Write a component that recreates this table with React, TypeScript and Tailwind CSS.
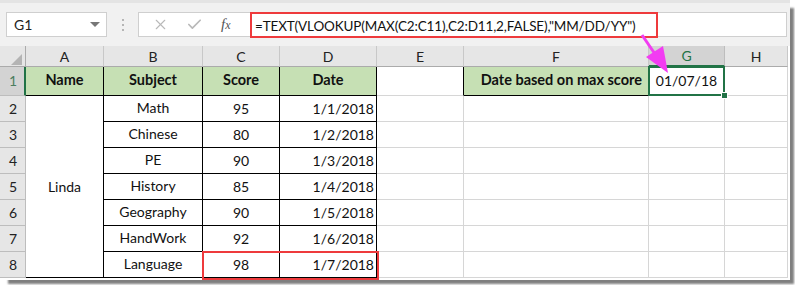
import { X, Check } from "lucide-react";

const font = { fontFamily: "Lato, 'Open Sans', sans-serif" };

// column widths: row header, A..H
const cols = "grid-cols-[26px_78px_99px_77px_97px_87px_185px_76px_63px]";

const rows = [
  { subject: "Math", score: "95", date: "1/1/2018" },
  { subject: "Chinese", score: "80", date: "1/2/2018" },
  { subject: "PE", score: "90", date: "1/3/2018" },
  { subject: "History", score: "85", date: "1/4/2018" },
  { subject: "Geography", score: "90", date: "1/5/2018" },
  { subject: "HandWork", score: "92", date: "1/6/2018" },
  { subject: "Language", score: "98", date: "1/7/2018" },
];

function FormulaBar() {
  return (
    <div className="h-[46px] bg-[#f1f1f1] border-t-[3px] border-[#e4e4e4] flex items-start pt-[9px] pl-[6px]">
      <div className="w-[101px] h-[25px] bg-white border border-[#cfcfcf] flex items-center justify-between pl-[7px] pr-[6px]">
        <span className="text-[14px] text-[#222]">G1</span>
        <span className="w-0 h-0 border-l-[5px] border-r-[5px] border-t-[5px] border-l-transparent border-r-transparent border-t-[#777]" />
      </div>
      <div className="w-[31px] h-[25px] flex flex-col items-center justify-center gap-[3px]">
        <span className="w-[2px] h-[2px] bg-[#b5b5b5]" />
        <span className="w-[2px] h-[2px] bg-[#b5b5b5]" />
        <span className="w-[2px] h-[2px] bg-[#b5b5b5]" />
      </div>
      <div className="w-[112px] h-[25px] bg-white border border-[#cfcfcf] border-r-0 flex items-center">
        <X className="ml-[13px] text-[#b9b9b9]" size={17} strokeWidth={1.6} />
        <Check className="ml-[17px] text-[#b9b9b9]" size={17} strokeWidth={2.4} />
        <span className="ml-[18px] text-[15px] italic text-[#555]" style={{ fontFamily: "'Liberation Serif', serif" }}>
          f<span className="text-[12px]">x</span>
        </span>
      </div>
      <div className="flex-1 h-[25px] bg-white border border-[#cfcfcf] mr-[3px] relative">
        <div className="absolute left-[-1px] top-[-1px] w-[408px] h-[26px] border-2 border-[#ee3a3c]" />
        <span className="absolute left-[4px] top-[3px] text-[13.5px] text-[#111] whitespace-nowrap tracking-[-0.15px]">
          =TEXT(VLOOKUP(MAX(C2:C11),C2:D11,2,FALSE),"MM/DD/YY")
        </span>
      </div>
    </div>
  );
}

function ColumnHeaders() {
  const names = ["A", "B", "C", "D", "E", "F", "G", "H"];
  return (
    <>
      <div className="h-[21px] bg-[#e6e6e6] border-r border-b border-[#ababab] relative">
        <svg className="absolute left-0 top-0" width="26" height="21">
          <polygon points="22,8 22,19 11,19" fill="#b4b4b4" />
        </svg>
      </div>
      {names.map((n) => (
        <div
          key={n}
          className={
            n === "G"
              ? "h-[21px] bg-[#d3d3d3] border-r border-b-2 border-r-[#bdbdbd] border-b-[#217346] flex items-center justify-center text-[14px] text-[#217346]"
              : "h-[21px] bg-[#e6e6e6] border-r border-b border-r-[#c8c8c8] border-b-[#ababab] flex items-center justify-center text-[14px] text-[#222]"
          }
        >
          {n}
        </div>
      ))}
    </>
  );
}

function RowHeader({ n }: { n: number }) {
  return (
    <div
      className={
        n === 1
          ? "bg-[#d3d3d3] border-r-2 border-[#217346] border-b border-b-[#bdbdbd] flex items-end pb-[4px] pl-[9px] text-[14px] text-[#4c7d5f]"
          : "bg-[#e6e6e6] border-r border-b border-[#bdbdbd] flex items-end pb-[2px] pl-[9px] text-[14px] text-[#222]"
      }
    >
      {n}
    </div>
  );
}

const green = "bg-[#c6e0b4] border-r border-b border-black flex items-end justify-center pb-[4px] text-[14.5px] font-bold text-[#111]";
const grid = "border-r border-b border-[#d6d6d6]";
const cell = "border-r border-b border-black flex text-[14px] text-[#111]";

export default function App() {
  return (
    <div className="w-[795px] h-[285px] bg-white overflow-hidden" style={font}>
      <div className="w-[790px] h-[280px] bg-white relative shadow-[6px_6px_2px_-2px_rgba(0,0,0,0.5)]">
        <FormulaBar />
        <div className={`grid ${cols} grid-rows-[21px_29px_repeat(7,26px)]`}>
          <ColumnHeaders />

          {/* row 1: titles */}
          <RowHeader n={1} />
          <div className={green}>Name</div>
          <div className={green}>Subject</div>
          <div className={green}>Score</div>
          <div className={green}>Date</div>
          <div className="border-r border-r-black border-b border-b-[#d6d6d6]" />
          <div className={`${green} justify-end pr-[6px]`}>Date based on max score</div>
          <div className="border-2 border-[#217346] -mt-px -ml-px flex items-end justify-center pb-[3px] text-[14px] text-[#111] relative">
            01/07/18
            <span className="absolute right-[-5px] bottom-[-5px] w-[7px] h-[7px] bg-[#217346] border border-white" />
          </div>
          <div className={grid} />

          {/* rows 2-8 */}
          {rows.map((r, i) => (
            <div key={r.subject} className="contents">
              <RowHeader n={i + 2} />
              {i === 0 && (
                <div className={`${cell} row-span-7 items-center justify-center`}>Linda</div>
              )}
              <div className={`${cell} items-center justify-center pb-[2px]`}>{r.subject}</div>
              <div className={`${cell} items-end justify-center pb-[2px]`}>{r.score}</div>
              <div className={`${cell} items-end justify-end pr-[2px] pb-[2px]`}>{r.date}</div>
              <div className={grid} />
              <div className={grid} />
              <div className={grid} />
              <div className={grid} />
            </div>
          ))}
        </div>

        {/* highlight around the max score row */}
        <div className="absolute left-[202px] top-[251px] w-[177px] h-[29px] border-2 border-[#ee3a3c]" />

        {/* arrow from formula to result cell */}
        <svg className="absolute left-0 top-0 pointer-events-none" width="795" height="285">
          <line x1="642" y1="35" x2="655" y2="54" stroke="#f23cf2" strokeWidth="3" />
          <polygon points="646,57 663,46 668,73" fill="#f23cf2" />
        </svg>
      </div>
    </div>
  );
}
